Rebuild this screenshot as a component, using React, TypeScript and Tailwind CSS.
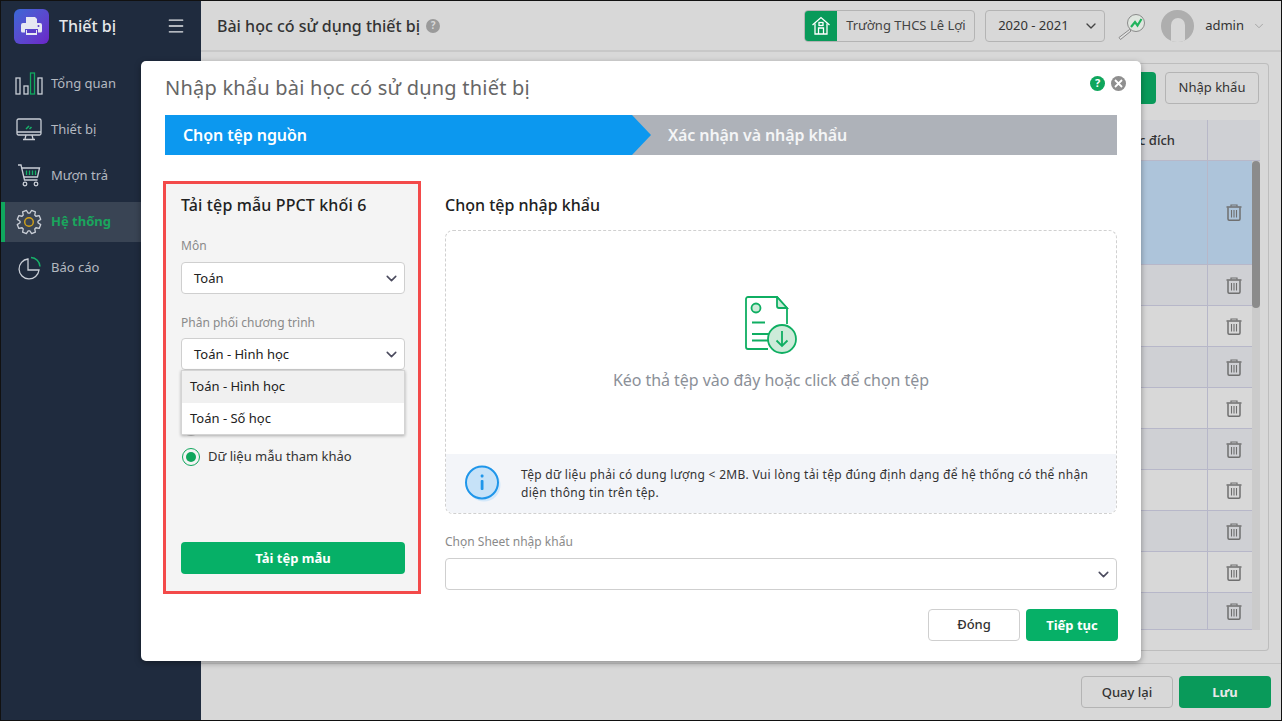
import { ChevronDown, Menu } from "lucide-react";

const FONT = "font-['Noto_Sans','Open_Sans',sans-serif]";

function PrinterLogo() {
  return (
    <div className="w-[35px] h-[35px] rounded-[6px] bg-gradient-to-br from-[#3767d6] to-[#6a22c8] flex items-center justify-center">
      <svg width="23" height="20" viewBox="0 0 23 20">
        <path d="M6 1h9l2 2v4H6z" fill="#e6e8f2" />
        <path d="M3 7h17a2 2 0 0 1 2 2v6a1.500 1.500 0 0 1-1.500 1.500H18V13H5v3.500H2.500A1.500 1.500 0 0 1 1 15V9a2 2 0 0 1 2-2z" fill="#e6e8f2" />
        <rect x="6" y="14" width="11" height="5" fill="#e6e8f2" />
        <rect x="7" y="14" width="9" height="3" fill="#5a3cc8" />
        <circle cx="18.500" cy="10" r="1" fill="#5a3cc8" />
      </svg>
    </div>
  );
}

function IconOverview() {
  return (
    <svg width="28" height="24" viewBox="0 0 28 24" fill="none" strokeWidth="1.300">
      <rect x="1" y="6" width="4" height="16" stroke="#c9ced6" />
      <rect x="9" y="14" width="4" height="8" stroke="#c9ced6" />
      <rect x="15.500" y="1" width="4" height="21" stroke="#11a85f" />
      <rect x="23" y="6" width="4" height="16" stroke="#c9ced6" />
    </svg>
  );
}

function IconMonitor() {
  return (
    <svg width="26" height="24" viewBox="0 0 26 24" fill="none" stroke="#c9ced6" strokeWidth="1.300">
      <rect x="1" y="1" width="24" height="16" rx="1.500" />
      <path d="M1 14h24M10 17l-1 4M16 17l1 4M7 21.500h12" />
      <path d="M10 11l3-3M13.500 11l2-2" stroke="#17b26a" strokeWidth="1.500" />
    </svg>
  );
}

function IconCart() {
  return (
    <svg width="24" height="24" viewBox="0 0 24 24" fill="none" stroke="#c9ced6" strokeWidth="1.300">
      <path d="M1 1h3l3.500 15h13" />
      <path d="M4.500 4h18l-2 9H6.800" />
      <path d="M9.500 6.500v4.500M12.500 6.500v4.500M15.500 6.500v4.500M18.500 6.500v4.500" stroke="#17b26a" />
      <circle cx="8" cy="20" r="1.800" />
      <circle cx="19" cy="20" r="1.800" />
    </svg>
  );
}

function IconGear() {
  // 8 toothed cog outline
  const pts: string[] = [];
  for (let i = 0; i < 8; i++) {
    const a = (i * Math.PI) / 4 + Math.PI / 8;
    [
      [-0.3, 9],
      [-0.17, 12],
      [0.17, 12],
      [0.3, 9],
    ].forEach(([d, r]) => {
      pts.push((13 + r * Math.cos(a + d)).toFixed(2) + "," + (13 + r * Math.sin(a + d)).toFixed(2));
    });
  }
  return (
    <svg width="26" height="26" viewBox="0 0 26 26" fill="none">
      <polygon points={pts.join(" ")} stroke="#c9ced6" strokeWidth="1.300" strokeLinejoin="round" />
      <circle cx="13" cy="13" r="4.300" stroke="#d3a21a" strokeWidth="1.400" />
    </svg>
  );
}

function IconPie() {
  return (
    <svg width="24" height="24" viewBox="0 0 24 24" fill="none" strokeWidth="1.300">
      <path d="M11 3a10 10 0 1 0 11 11H11z" stroke="#c9ced6" />
      <path d="M14 1.500a9.500 9.500 0 0 1 9 9" stroke="#17b26a" strokeWidth="1.500" />
    </svg>
  );
}

function IconHome() {
  return (
    <svg width="20" height="20" viewBox="0 0 20 20" fill="none" stroke="#fff" strokeWidth="1.300">
      <path d="M1.500 9L10 1.500 18.500 9" />
      <path d="M4 7.500V18h12V7.500" />
      <rect x="8" y="6.500" width="4" height="3" />
      <path d="M7.500 18v-6h5v6" />
    </svg>
  );
}

function IconSearchChart() {
  return (
    <svg width="28" height="30" viewBox="0 0 28 30" fill="none">
      <circle cx="19" cy="12" r="8.500" fill="#dfe6df" stroke="#8a8a8a" strokeWidth="1" />
      <path d="M14 16l4-5 2.500 3.500L24.500 8" stroke="#20b45c" strokeWidth="2.200" />
      <path d="M12.500 18.500L2 26.500l1.500 2 10.500-8.500z" stroke="#8a8a8a" strokeWidth="1" fill="#e2e2e2" />
    </svg>
  );
}

function Avatar() {
  return (
    <div className="w-[33px] h-[32px] rounded-full bg-[#aeaeae] flex items-start justify-center overflow-hidden">
      <div className="w-[14px] h-[40px] rounded-full bg-[#d8d8d8] mt-[8px]" />
    </div>
  );
}

function Trash() {
  return (
    <svg width="16" height="17" viewBox="0 0 16 17" fill="none" stroke="#6f6f6f">
      <path d="M0.500 3h15" strokeWidth="1.500" />
      <path d="M5 2.500V1h6v1.500" strokeWidth="1.200" />
      <path d="M2 3.500v11.500a1.200 1.200 0 0 0 1.200 1.200h9.600A1.200 1.200 0 0 0 14 15V3.500" strokeWidth="1.500" />
      <path d="M5.500 6v7.500M8 6v7.500M10.500 6v7.500" strokeWidth="1.100" />
    </svg>
  );
}

function FileDownload() {
  return (
    <svg width="52" height="58" viewBox="0 0 52 58" fill="none" stroke="#0fae62" strokeWidth="1.800">
      <path d="M42 28V12L32 1H3a2 2 0 0 0-2 2v48a2 2 0 0 0 2 2h20" />
      <path d="M32 1v9a2 2 0 0 0 2 2h8z" fill="#cdebd9" />
      <circle cx="11" cy="12" r="4.500" fill="#cdebd9" />
      <path d="M7 26.500h13M7 38h18M7 44.500h18" />
      <circle cx="37" cy="43" r="14" fill="#cdebd9" />
      <path d="M37 35v15M31.500 44.500L37 50l5.500-5.500" />
    </svg>
  );
}

function InfoIcon() {
  return (
    <svg width="36" height="37" viewBox="0 0 36 37">
      <circle cx="19" cy="20" r="16.500" fill="#d3e8fa" />
      <circle cx="17" cy="17.500" r="16" fill="#c6e2f8" stroke="#1f96ea" strokeWidth="2" />
      <rect x="15.700" y="15" width="2.800" height="10" rx="1" fill="#1f96ea" />
      <rect x="15.700" y="9.500" width="2.800" height="3" rx="1" fill="#1f96ea" />
    </svg>
  );
}

function Select({ value }: { value?: string }) {
  return (
    <div className="h-8 rounded-[4px] border border-[#cfcfcf] bg-white flex items-center justify-between pr-[4px] pl-3 text-[13px] text-[#212121]">
      <span className="pt-px">{value}</span>
      <ChevronDown size={17} strokeWidth={2.2} className="text-[#4b4b5e]" />
    </div>
  );
}

const navItems = [
  { label: "Tổng quan", icon: <IconOverview /> },
  { label: "Thiết bị", icon: <IconMonitor /> },
  { label: "Mượn trả", icon: <IconCart /> },
  { label: "Hệ thống", icon: <IconGear />, active: true },
  { label: "Báo cáo", icon: <IconPie /> },
];

// row heights of the table that sits behind the dialog
const rows = [104, 41, 41, 41, 41, 41, 41, 41, 41, 37];

export default function App() {
  return (
    <div className={FONT + " relative w-[1282px] h-[721px] overflow-hidden flex border border-[#111] bg-[#d8d8d8]"}>
      <aside className="w-[200px] shrink-0 bg-[#1f2b3e]">
        <div className="h-[50px] flex items-center pl-[13px] pr-[15px]">
          <PrinterLogo />
          <span className="ml-[10px] text-[16px] font-medium text-[#e6e8ea] flex-1">Thiết bị</span>
          <Menu size={20} strokeWidth={1.6} className="text-[#e6e8ea]" />
        </div>
        <nav className="mt-[13px] flex flex-col gap-[6px]">
          {navItems.map((x) => (
            <div
              key={x.label}
              className={
                "h-[40px] flex items-center text-[13px] " +
                (x.active
                  ? "bg-[#394454] border-l-[4px] border-[#10a85e] pl-[10px] font-bold text-[#1aa65d]"
                  : "pl-[14px] text-[#b4b9c0]")
              }>
              <div className="w-[28px] flex justify-center">{x.icon}</div>
              <span className="ml-[8px]">{x.label}</span>
            </div>
          ))}
        </nav>
      </aside>

      <main className="flex-1 flex flex-col min-w-0">
        <header className="h-[51px] shrink-0 flex items-center border-b-2 border-[#c8c8c8] pl-[16px]">
          <h1 className="text-[16px] font-medium text-[#333]">Bài học có sử dụng thiết bị</h1>
          <span className="ml-[6px] w-[14px] h-[14px] rounded-full bg-[#9a9a9a] text-[10px] font-bold text-[#d8d8d8] flex items-center justify-center">
            ?
          </span>
          <div className="ml-auto flex items-center">
            <div className="w-[171px] h-8 rounded-[4px] border border-[#b4b4b4] flex items-center overflow-hidden">
              <div className="w-[32px] h-full bg-[#099a5a] flex items-center justify-center">
                <IconHome />
              </div>
              <span className="ml-[9px] text-[13px] text-[#444]">Trường THCS Lê Lợi</span>
            </div>
            <div className="ml-[10px] w-[120px] h-8 rounded-[4px] border border-[#b4b4b4] flex items-center justify-between pl-[12px] pr-[5px] text-[13px] text-[#333]">
              <span>2020 - 2021</span>
              <ChevronDown size={16} strokeWidth={2} className="text-[#444]" />
            </div>
            <div className="ml-[12px]">
              <IconSearchChart />
            </div>
            <div className="ml-[16px]">
              <Avatar />
            </div>
            <span className="ml-[11px] text-[13px] text-[#333]">admin</span>
            <ChevronDown size={14} strokeWidth={1.4} className="ml-[8px] mr-[15px] text-[#9a9a9a]" />
          </div>
        </header>

        <div className="h-[588px] mt-[11px] mx-[12px] border border-[#bdbdbd] rounded-[4px] border-l-0 flex flex-col pl-[8px] pr-[8px]">
          <div className="h-[56px] shrink-0 flex justify-end items-start gap-[9px] pt-[8px] pr-px">
            <div className="w-[60px] h-8 rounded-[4px] bg-[#099a5a]" />
            <div className="w-[94px] h-8 rounded-[4px] border border-[#b4b4b4] flex items-center justify-center text-[13px] text-[#333]">
              Nhập khẩu
            </div>
          </div>
          <div className="flex-1 flex min-h-0 overflow-hidden mb-[20px]">
            <div className="flex-1 flex flex-col min-w-0">
              <div className="h-[41px] shrink-0 bg-[#cfd0d4] flex border-b border-[#b8b8c8]">
                <div className="flex-1 flex items-center justify-end pr-[32px] pt-px text-[13px] font-medium text-[#333]">
                  Mục đích
                </div>
                <div className="w-[53px] border-l border-[#b8b8c8]" />
              </div>
              {rows.map((h, i) => (
                <div
                  key={i}
                  style={{ height: h }}
                  className={
                    "shrink-0 flex border-b border-[#b7b7c9] " +
                    (i === 0 ? "bg-[#adc4da]" : i % 2 === 1 ? "bg-[#cfd0d4]" : "bg-[#d8d8d8]")
                  }>
                  <div className="flex-1" />
                  <div className="w-[53px] border-l border-[#b7b7c9] flex items-center justify-center">
                    <Trash />
                  </div>
                </div>
              ))}
            </div>
          </div>
        </div>

        <footer className="flex-1 mt-[12px] border-t border-[#c4c4c4] flex justify-end items-start gap-[6px] pt-[12px] pr-[10px]">
          <div className="w-[92px] h-8 rounded-[4px] border border-[#b4b4b4] flex items-center justify-center pt-px text-[13px] font-medium text-[#333]">
            Quay lại
          </div>
          <div className="w-[92px] h-8 rounded-[4px] bg-[#099a5a] flex items-center justify-center pt-px text-[13px] font-bold text-[#e8e8e8]">
            Lưu
          </div>
        </footer>
      </main>

      {/* scrollbar of the table behind the dialog */}
      <div className="absolute left-[1251px] top-[160px] w-[8px] h-[469px] bg-[#cbcbcb]">
        <div className="h-[147px] rounded-[4px] bg-[#8b8b8b]" />
      </div>

      {/* dialog */}
      <div className="absolute left-[140px] top-[60px] w-[1000px] h-[600px] bg-white rounded-[5px] shadow-[0_2px_6px_rgba(0,0,0,0.35)] px-[24px] flex flex-col">
        <div className="absolute right-[15px] top-[15px] flex items-center gap-[6px]">
          <span className="w-[15px] h-[15px] rounded-full bg-[#0fa65c] text-white text-[11px] font-bold flex items-center justify-center">
            ?
          </span>
          <span className="w-[15px] h-[15px] rounded-full bg-[#8f8f8f] flex items-center justify-center">
            <svg width="9" height="9" viewBox="0 0 9 9" stroke="#fff" strokeWidth="1.800">
              <path d="M1 1l7 7M8 1L1 8" />
            </svg>
          </span>
        </div>

        <h2 className="h-[54px] shrink-0 flex items-center text-[20px] tracking-[0.22px] text-[#666]">
          Nhập khẩu bài học có sử dụng thiết bị
        </h2>

        <div className="h-[40px] shrink-0 flex bg-[#aeb2b9] text-[16px] tracking-[-0.1px] font-semibold text-white">
          <div className="w-[467px] relative bg-[#0c98ef] flex items-center pl-[18px]">
            Chọn tệp nguồn
            <div className="absolute left-full top-0 w-0 h-0 border-y-[20px] border-y-transparent border-l-[19px] border-l-[#0c98ef]" />
          </div>
          <div className="flex items-center pl-[36px] text-[#f4f5f6]">Xác nhận và nhập khẩu</div>
        </div>

        <div className="flex-1 flex mt-[26px] min-h-0 -ml-[2px]">
          <section className="w-[258px] h-[413px] shrink-0 border-[3px] border-[#f34a4a] bg-[#f4f4f4] pl-[15px] pr-[13px] flex flex-col relative">
            <h3 className="mt-[9px] text-[16px] leading-[24px] tracking-[0.13px] font-medium text-[#212121]">
              Tải tệp mẫu PPCT khối 6
            </h3>
            <label className="mt-[20px] h-[18px] text-[12px] leading-[18px] text-[#8a8a8a]">Môn</label>
            <div className="mt-[7px]">
              <Select value="Toán" />
            </div>
            <label className="mt-[20px] h-[18px] text-[12px] leading-[18px] text-[#8a8a8a]">Phân phối chương trình</label>
            <div className="mt-[6px] relative">
              <Select value="Toán - Hình học" />
              <div className="absolute left-0 right-0 top-[32px] z-10 bg-white border border-[#d4d4d4] shadow-[0_1px_3px_rgba(0,0,0,0.3)] text-[13px] text-[#212121]">
                <div className="h-8 flex items-center pl-2 bg-[#f0f0f0]">Toán - Hình học</div>
                <div className="h-[31px] flex items-center pl-2">Toán - Số học</div>
              </div>
            </div>
            <div className="mt-[48px] ml-px w-[18px] h-[18px] rounded-full border border-[#bbb]" />
            <div className="mt-[11px] flex items-center text-[13px] text-[#333]">
              <span className="ml-px w-[18px] h-[18px] rounded-full border border-[#0fa65c] flex items-center justify-center">
                <span className="w-[10px] h-[10px] rounded-full bg-[#0fa65c]" />
              </span>
              <span className="ml-[8px]">Dữ liệu mẫu tham khảo</span>
            </div>
            <button className="mt-auto mb-[17px] h-8 pt-px rounded-[4px] bg-[#06b067] text-[13px] font-bold text-white">
              Tải tệp mẫu
            </button>
          </section>

          <section className="flex-1 min-w-0 ml-[24px] flex flex-col">
            <h3 className="mt-[12px] text-[16px] leading-[24px] font-medium text-[#212121]">Chọn tệp nhập khẩu</h3>
            <div className="mt-[13px] h-[284px] rounded-[8px] border border-dashed border-[#d0d0d0] flex flex-col overflow-hidden">
              <div className="flex-1 flex flex-col items-center pt-[65px] pr-[21px]">
                <FileDownload />
                <p className="mt-[15px] pl-px text-[16px] leading-[22px] tracking-[-0.05px] text-[#8b9098]">
                  Kéo thả tệp vào đây hoặc click để chọn tệp
                </p>
              </div>
              <div className="h-[59px] shrink-0 bg-[#f3f5f9] flex items-center pl-[19px]">
                <InfoIcon />
                <p className="ml-[20px] w-[590px] text-[12px] leading-[18px] tracking-[0.3px] text-[#333]">
                  Tệp dữ liệu phải có dung lượng &lt; 2MB. Vui lòng tải tệp đúng định dạng để hệ thống có thể nhận diện
                  thông tin trên tệp.
                </p>
              </div>
            </div>
            <label className="mt-[19px] h-[18px] text-[12px] leading-[18px] text-[#8a8a8a]">Chọn Sheet nhập khẩu</label>
            <div className="mt-[7px]">
              <Select />
            </div>
            <div className="mt-[19px] flex justify-end gap-[6px] -mr-px">
              <button className="w-[92px] h-8 rounded-[4px] border border-[#cfcfcf] bg-white text-[13px] font-medium text-[#333]">
                Đóng
              </button>
              <button className="w-[92px] h-8 pt-px rounded-[4px] bg-[#06b067] text-[13px] font-bold text-white">
                Tiếp tục
              </button>
            </div>
          </section>
        </div>
      </div>
    </div>
  );
}
